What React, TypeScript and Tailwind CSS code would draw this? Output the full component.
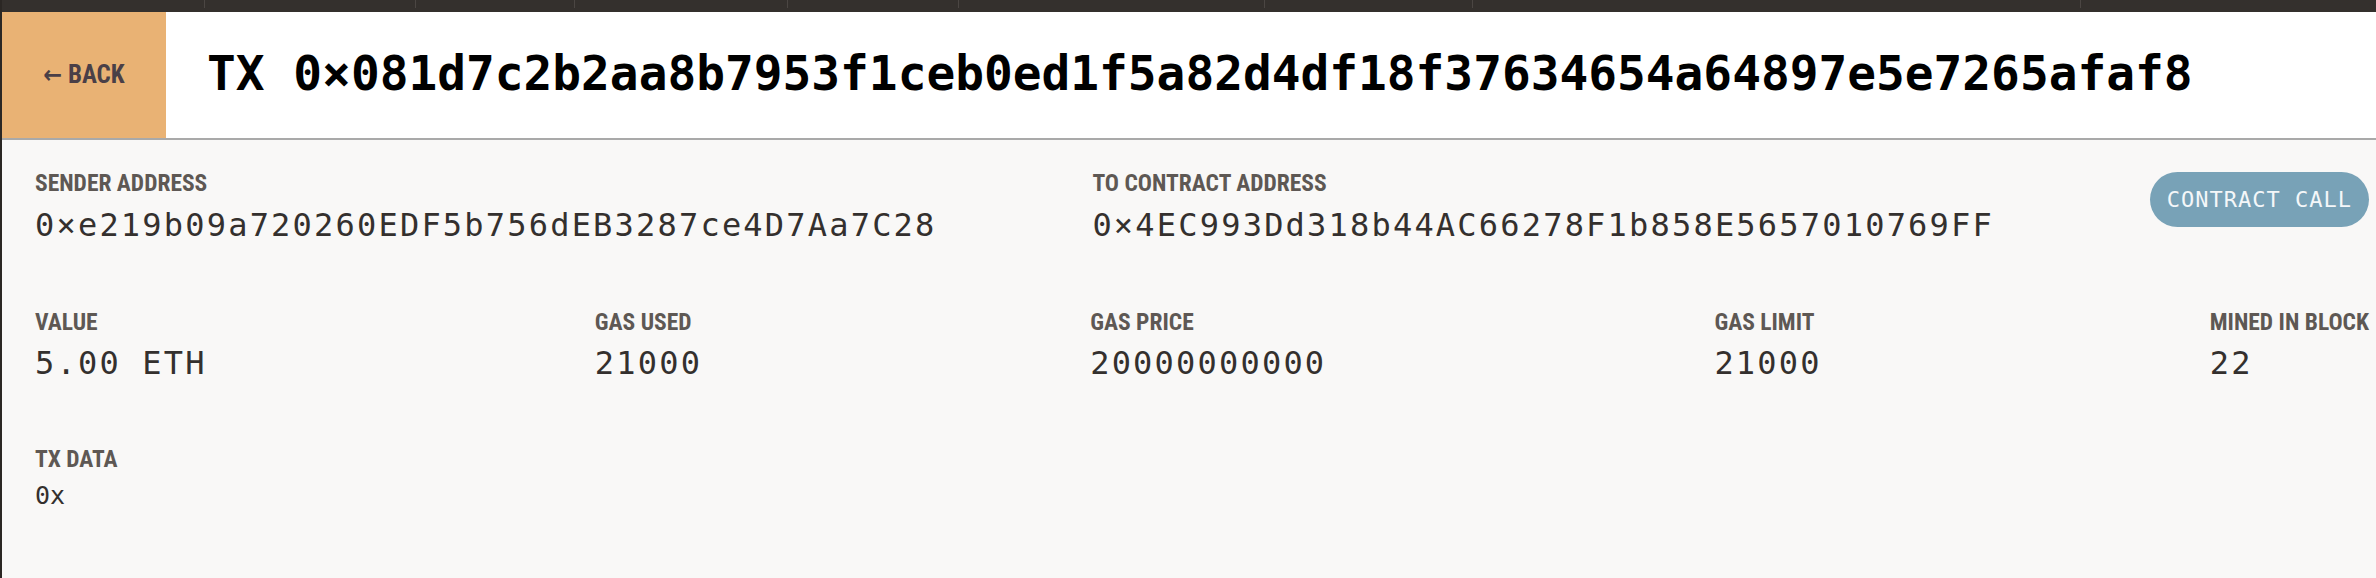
import React from 'react';

const mono = "font-['DejaVu_Sans_Mono','Liberation_Mono',monospace]";
const narrow =
  "font-['Roboto_Condensed','DejaVu_Sans_Condensed','Liberation_Sans_Narrow',sans-serif] [font-stretch:condensed]";

const tabs = [203, 211, 159, 213, 171, 306, 208, 608];

const Field: React.FC<{ label: string; value: string; small?: boolean }> = ({ label, value, small }) => (
  <div className="flex flex-col">
    <span className={`${narrow} text-[23.5px] leading-none font-bold text-[#5e5854] uppercase whitespace-nowrap`}>
      {label}
    </span>
    <span
      className={`${mono} leading-none text-[#34302e] whitespace-nowrap ${
        small ? 'mt-[11px] text-[25px] tracking-normal' : 'mt-[13px] text-[32px] tracking-[2.2px]'
      }`}
    >
      {value}
    </span>
  </div>
);

export default function App() {
  return (
    <div className="w-[2376px] h-[578px] overflow-hidden bg-[#f9f8f7] border-l-2 border-[#2b2724] flex flex-col">
      {/* Top bar */}
      <div className="h-[12px] bg-[#34302d] flex shrink-0">
        {tabs.map((w, i) => (
          <div key={i} style={{ width: w }} className="h-[8px] border-r border-[#4b4643] shrink-0" />
        ))}
      </div>

      {/* Header */}
      <header className="h-[128px] shrink-0 bg-white border-b-2 border-[#a9a9a9] flex items-stretch">
        <button className="w-[164px] bg-[#e9b274] flex items-center justify-center">
          <span className={`${narrow} text-[25px] font-bold text-[#4a3f47]`}>← BACK</span>
        </button>
        <h1 className={`${mono} ml-[41px] mt-[-2px] self-center text-[47.8px] font-bold text-black leading-none whitespace-nowrap`}>
          TX 0×081d7c2b2aa8b7953f1ceb0ed1f5a82d4df18f37634654a64897e5e7265afaf8
        </h1>
      </header>

      {/* Body */}
      <main className="pl-[33px] pr-[7px] pt-[32px]">
        <div className="flex justify-between items-start">
          <Field label="Sender Address" value="0×e219b09a720260EDF5b756dEB3287ce4D7Aa7C28" />
          <Field label="To Contract Address" value="0×4EC993Dd318b44AC66278F1b858E5657010769FF" />
          <div className={`${mono} h-[55px] px-[17px] rounded-full bg-[#78a2b7] text-[#f4f7f9] text-[22px] tracking-[1px] flex items-center whitespace-nowrap`}>
            CONTRACT CALL
          </div>
        </div>

        <div className="flex justify-between items-start mt-[70px]">
          <Field label="Value" value="5.00 ETH" />
          <Field label="Gas Used" value="21000" />
          <Field label="Gas Price" value="20000000000" />
          <Field label="Gas Limit" value="21000" />
          <Field label="Mined in Block" value="22" />
        </div>

        <div className="flex mt-[69px]">
          <Field label="TX Data" value="0x" small />
        </div>
      </main>
    </div>
  );
}
